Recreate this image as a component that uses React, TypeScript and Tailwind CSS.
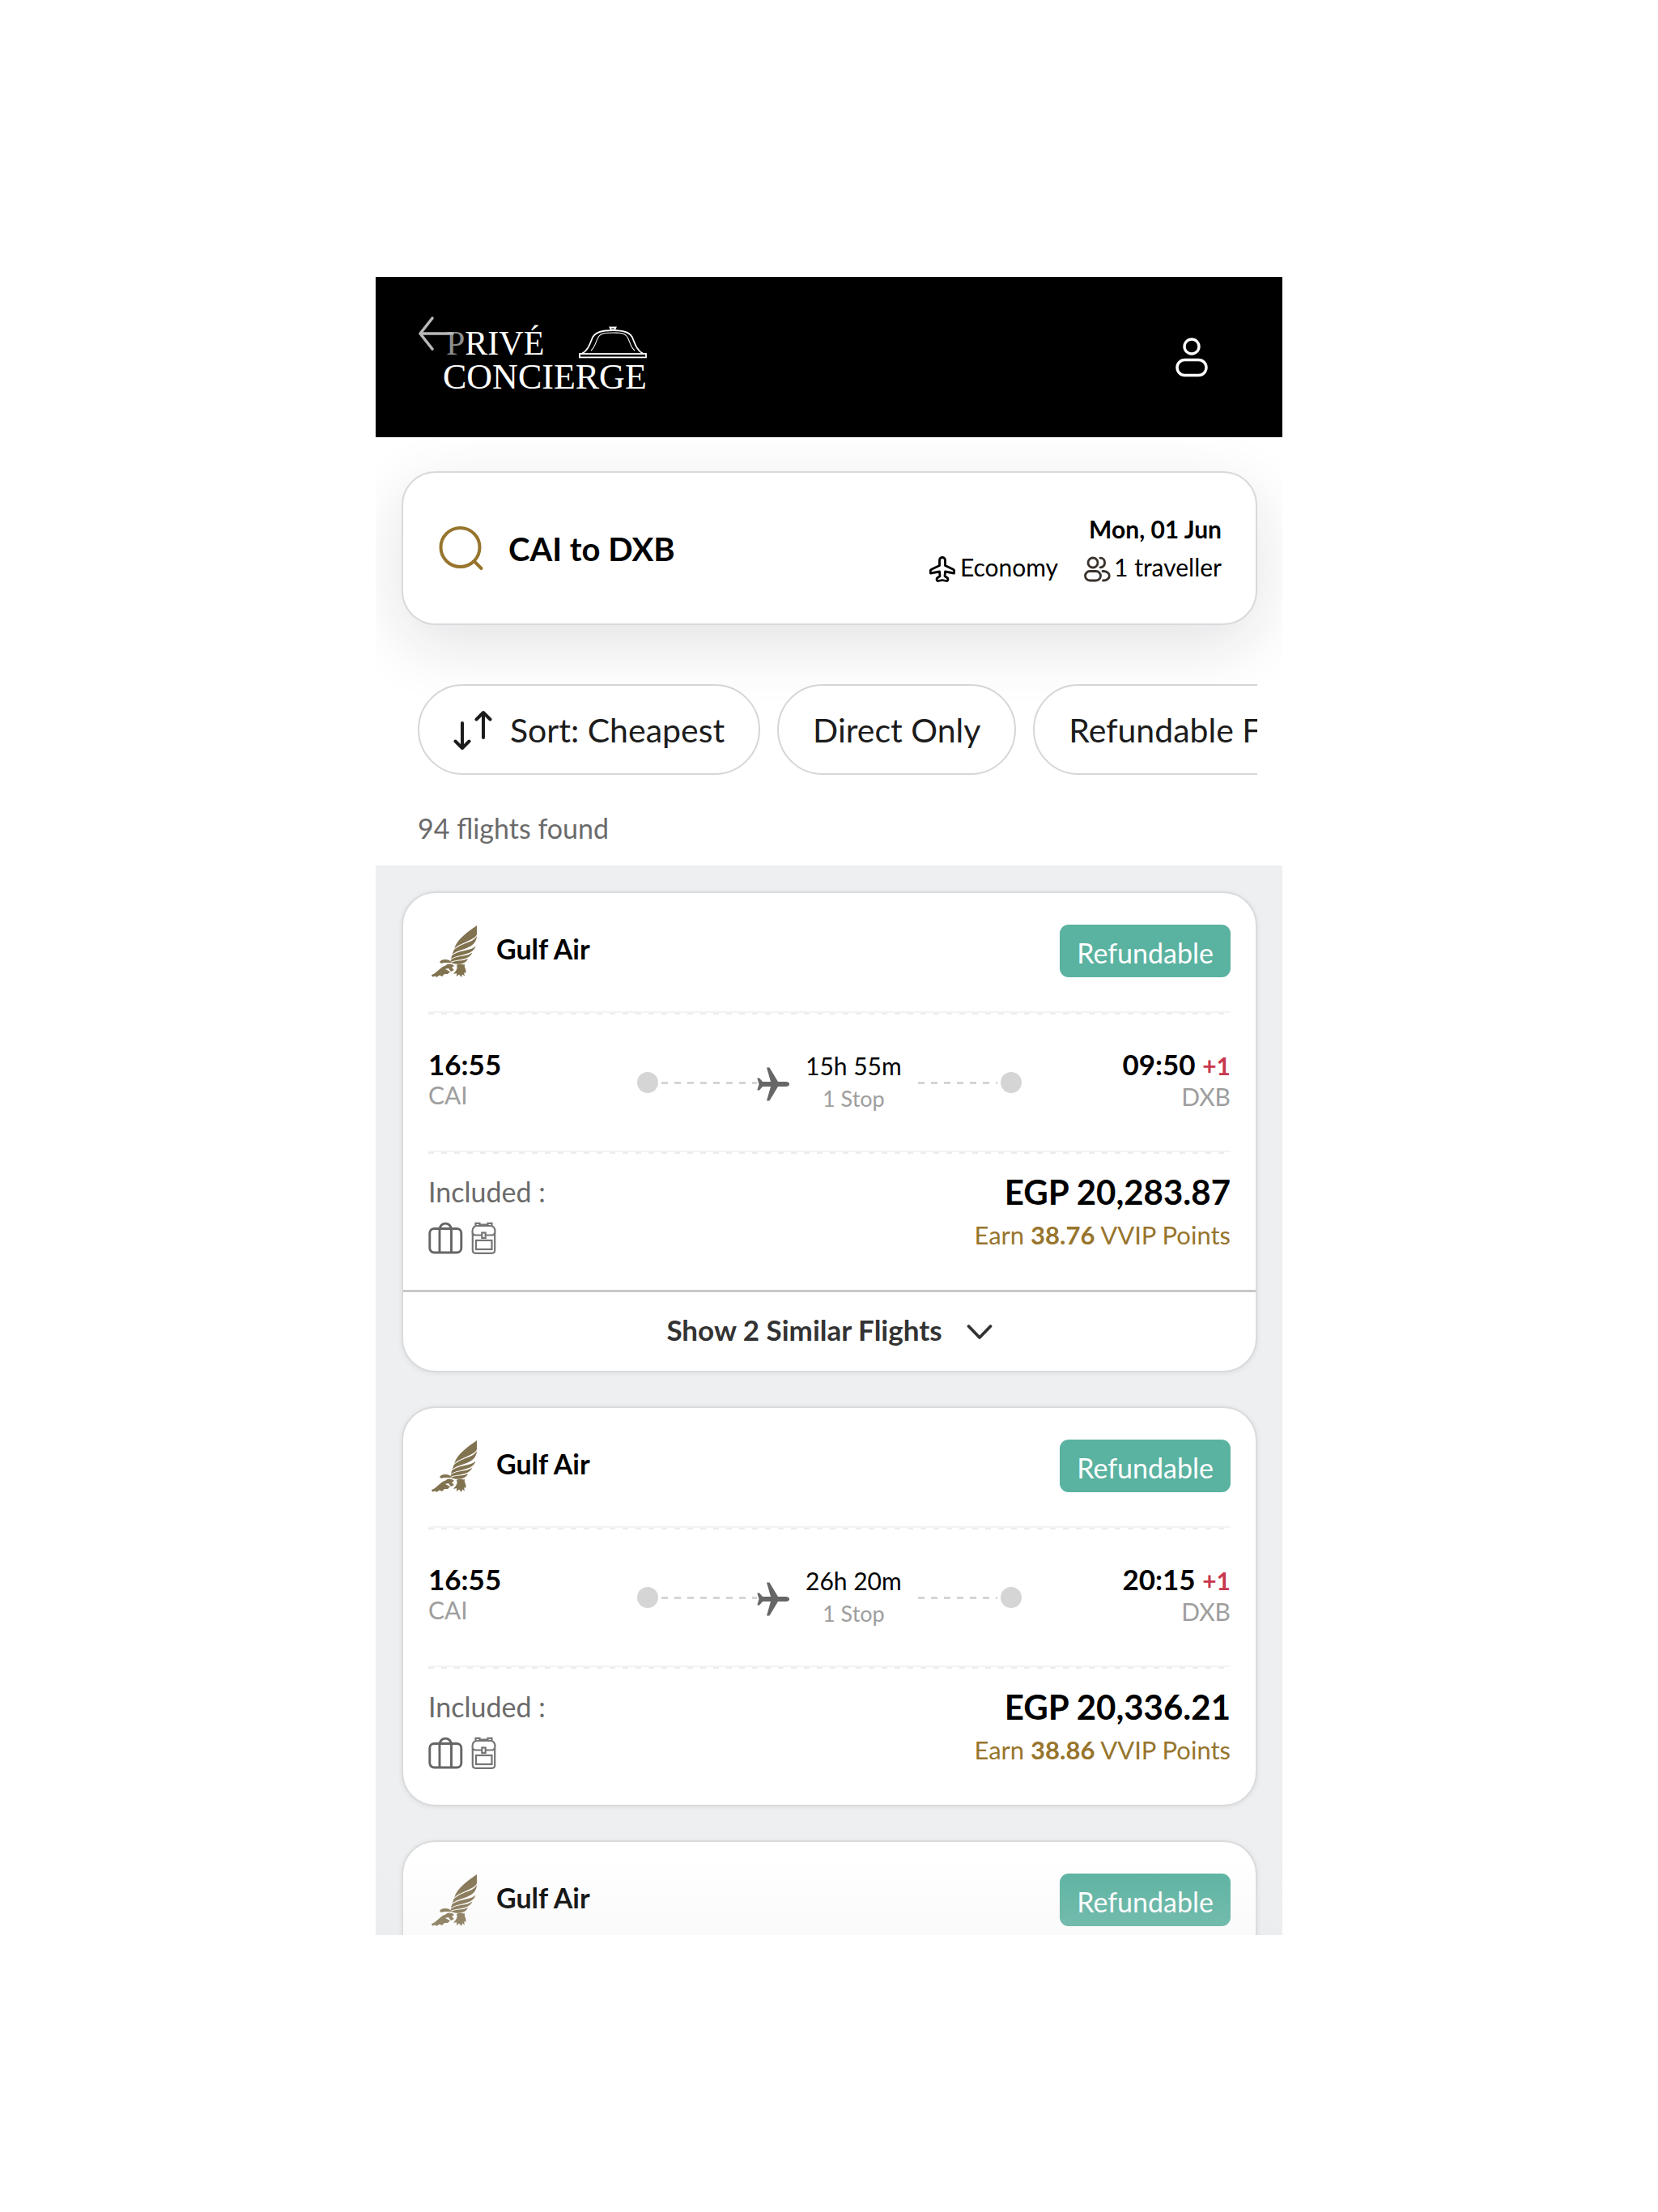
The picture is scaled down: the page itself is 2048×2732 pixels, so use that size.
type Flight = {
  id: number;
  airline: string;
  departs: string;
  from: string;
  duration: string;
  stops: string;
  arrives: string;
  dayShift: string;
  to: string;
  price: string;
  points: string;
  similar?: number;
};

const flights: Flight[] = [
  {
    id: 1,
    airline: "Gulf Air",
    departs: "16:55",
    from: "CAI",
    duration: "15h 55m",
    stops: "1 Stop",
    arrives: "09:50",
    dayShift: "+1",
    to: "DXB",
    price: "EGP 20,283.87",
    points: "38.76",
    similar: 2,
  },
  {
    id: 2,
    airline: "Gulf Air",
    departs: "16:55",
    from: "CAI",
    duration: "26h 20m",
    stops: "1 Stop",
    arrives: "20:15",
    dayShift: "+1",
    to: "DXB",
    price: "EGP 20,336.21",
    points: "38.86",
  },
  {
    id: 3,
    airline: "Gulf Air",
    departs: "16:55",
    from: "CAI",
    duration: "26h 20m",
    stops: "1 Stop",
    arrives: "20:15",
    dayShift: "+1",
    to: "DXB",
    price: "EGP 20,336.21",
    points: "38.86",
  },
];

export default function App() {
  return (
    <div className="h-screen bg-white py-[342px] font-['Lato','Open_Sans',sans-serif] text-black">
      <main className="relative mx-auto h-full w-full max-w-[1120px] overflow-hidden bg-white">
        <Header />
        <section className="pt-[42px]">
          <SearchSummary />
          <Filters />
          <p className="px-[52px] pt-[50px] pb-[30px] text-[34px] leading-8 text-[#6b6b6b]">94 flights found</p>
        </section>
        <section className="flex flex-col gap-[42px] bg-[#eeeff1] pt-8 pr-[31px] pb-10 pl-8">
          {flights.map((f) => (
            <FlightCard key={f.id} flight={f} />
          ))}
        </section>
        <div
          className="pointer-events-none absolute inset-x-0 bottom-0 h-24 bg-linear-to-b from-[#e6e6e6]/0 to-[#e6e6e6]/20"
          aria-hidden="true"
        />
      </main>
    </div>
  );
}

function Header() {
  return (
    <header className="relative z-10 flex items-start justify-between bg-black pt-[60px] pr-[92px] pb-[54px] pl-[83px] text-white">
      <button type="button" aria-label="Back" className="absolute top-[48px] left-[52px]">
        <BackArrow />
      </button>
      <a href="#" className="font-['Liberation_Serif',serif]">
        <span className="flex items-end justify-between pl-1">
          <span className="text-[42px] leading-[44px]">
            <span className="text-[#8c8c8c]">P</span>RIVÉ
          </span>
          <Cloche />
        </span>
        <span className="block text-[44px] leading-10">CONCIERGE</span>
      </a>
      <button type="button" aria-label="Account" className="pt-[14px]">
        <UserIcon />
      </button>
    </header>
  );
}

function SearchSummary() {
  return (
    <div className="mr-[31px] ml-8 flex h-[190px] items-center justify-between rounded-[42px] border-2 border-[#d9d9d9] bg-white pr-[42px] pl-[44px] shadow-[0_24px_80px_rgba(25,25,45,0.12)]">
      <div className="flex items-center gap-[30px]">
        <SearchIcon />
        <h1 className="pt-[2px] text-[40px] leading-[50px] font-bold">CAI to DXB</h1>
      </div>
      <div className="flex flex-col items-end text-[30px] leading-[47px]">
        <span className="font-bold">Mon, 01 Jun</span>
        <div className="flex gap-8">
          <span className="flex items-center gap-[6px]">
            <PlaneOutline />
            Economy
          </span>
          <span className="flex items-center gap-1">
            <Travellers />
            1 traveller
          </span>
        </div>
      </div>
    </div>
  );
}

function Filters() {
  const chip =
    "flex h-28 shrink-0 items-center gap-[22px] rounded-full border-2 border-[#d6d6d6] bg-white/70 px-[42px] pt-[2px] text-[41px] whitespace-nowrap text-[#1c1c1c]";
  return (
    <div className="relative mt-[73px] mr-[31px] ml-[52px] flex gap-[21px] overflow-hidden">
      <button type="button" className={chip}>
        <SortIcon />
        Sort: Cheapest
      </button>
      <button type="button" className={chip}>Direct Only</button>
      <button type="button" className={chip}>Refundable Flights</button>
    </div>
  );
}

function FlightCard({ flight }: { flight: Flight }) {
  return (
    <article className="rounded-[42px] border-2 border-[#dadbdd] bg-white shadow-[0_1px_6px_rgba(0,0,0,0.08)]">
      <div className="px-[31px] pt-[39px] pb-10">
        <div className="flex items-center justify-between pb-[42px]">
          <div className="flex items-center gap-6 pl-1">
            <Falcon />
            <h2 className="pb-[6px] text-[34px] leading-10 font-bold">{flight.airline}</h2>
          </div>
          <span className="rounded-[11px] bg-[#5ab2a0] px-[21px] pt-1 text-[34px] leading-[61px] text-white">
            Refundable
          </span>
        </div>

        <Divider />

        <div className="grid grid-cols-[26fr_48fr_26fr] pt-[41px] pb-[43px]">
          <div>
            <p className="text-[35px] leading-10 font-bold">{flight.departs}</p>
            <p className="text-[30px] leading-9 text-[#9e9e9e]">{flight.from}</p>
          </div>
          <div className="flex items-center pt-[2px]">
            <Dot />
            <Dashes className="ml-1 flex-[6]" />
            <PlaneSolid />
            <div className="px-5 text-center">
              <p className="text-[30px] leading-10">{flight.duration}</p>
              <p className="text-[27px] leading-[42px] text-[#9e9e9e]">{flight.stops}</p>
            </div>
            <Dashes className="mr-1 flex-[5]" />
            <Dot />
          </div>
          <div className="text-right">
            <p className="text-[35px] leading-10 font-bold">
              {flight.arrives} <span className="text-[30px] text-[#c8384e]">{flight.dayShift}</span>
            </p>
            <p className="text-[30px] leading-9 text-[#9e9e9e]">{flight.to}</p>
          </div>
        </div>

        <Divider />

        <div className="flex justify-between pt-5">
          <div>
            <p className="pt-[2px] text-[34px] leading-[50px] text-[#6b6b6b]">Included :</p>
            <div className="flex gap-[10px] pt-3">
              <Suitcase />
              <Backpack />
            </div>
          </div>
          <div className="pt-[2px] text-right">
            <p className="text-[42px] leading-[50px] font-bold">{flight.price}</p>
            <p className="text-[31px] leading-[56px] text-[#97752d]">
              Earn <span className="font-bold">{flight.points}</span> VVIP Points
            </p>
          </div>
        </div>
      </div>

      {flight.similar && (
        <button
          type="button"
          className="flex h-[100px] w-full items-center justify-center gap-[30px] rounded-b-[40px] border-t-[3px] border-[#c9c9c9] pb-1 text-[35px] font-bold text-[#333333]"
        >
          Show {flight.similar} Similar Flights
          <Chevron />
        </button>
      )}
    </article>
  );
}

function Divider() {
  return (
    <div
      className="h-1 border-t-2 border-[#f3f3f3] bg-[repeating-linear-gradient(to_right,#ececec_0_7px,transparent_7px_16px)]"
      aria-hidden="true"
    />
  );
}

function Dashes({ className }: { className: string }) {
  return (
    <span
      className={`h-[3px] bg-[repeating-linear-gradient(to_right,#d5d5d5_0_8px,transparent_8px_16px)] ${className}`}
    />
  );
}

function Dot() {
  return <span className="size-[26px] shrink-0 rounded-full bg-[#d5d5d5]" />;
}

function BackArrow() {
  return (
    <svg width="46" height="44" viewBox="0 0 46 44" fill="none" stroke="#b8b8b8" strokeWidth="3.6" strokeLinecap="round" strokeLinejoin="round">
      <path d="M18 3 L3 22 L18 41 M3 22 H43" />
    </svg>
  );
}

function Cloche() {
  return (
    <svg width="84" height="40" viewBox="0 0 84 40" className="mb-[3px]" fill="none" stroke="white" strokeWidth="1.8">
      <rect x="1" y="34" width="82" height="4.4" />
      <path d="M3 34 C10 31 13 24 16 16 C19 7 29 5 42 5 C55 5 64 7 67 16 C70 24 73 31 80 34" />
      <path d="M15 30 C21 25 21 17 25 12 C28 8 34 8 42 8 C50 8 56 8 59 12 C63 17 63 25 69 30" strokeWidth="1.1" />
      <path d="M38.500 1.500 H45.500 L44 4.500 H40 Z" />
    </svg>
  );
}

function UserIcon() {
  return (
    <svg width="40" height="50" viewBox="0 0 40 50" fill="none" stroke="white" strokeWidth="3.4">
      <circle cx="20" cy="12" r="9" />
      <rect x="2" y="28.500" width="36" height="19" rx="9.500" />
    </svg>
  );
}

function SearchIcon() {
  return (
    <svg width="56" height="58" viewBox="0 0 56 58" fill="none" stroke="#97752d" strokeWidth="4" strokeLinecap="round">
      <circle cx="26.500" cy="28" r="24" />
      <path d="M43.500 45 L52.500 54" />
    </svg>
  );
}

function PlaneOutline() {
  return (
    <svg width="32" height="32" viewBox="0 0 32 32" className="mt-1" fill="none" stroke="currentColor" strokeWidth="2.800" strokeLinejoin="round">
      <path d="M12.500 5 C12.500 0.300 19.500 0.300 19.500 5 V11.500 L29 16 C31 17 31.500 18.500 30.500 21 L19.500 19 L19 24.500 L22.500 27 C23.500 29 22.500 30.800 21 30.500 L16 29.500 L11 30.500 C9.500 30.800 8.500 29 9.500 27 L13 24.500 L12.500 19 L1.500 21 C0.500 18.500 1 17 3 16 L12.500 11.500 Z" />
    </svg>
  );
}

function Travellers() {
  return (
    <svg width="33" height="32" viewBox="0 0 33 32" className="mt-1" fill="none" stroke="#3a322c" strokeWidth="2.800" strokeLinecap="round">
      <circle cx="11" cy="8" r="6" />
      <rect x="1.500" y="18.500" width="19" height="11.500" rx="5.700" />
      <path d="M20 2.200 C27.500 2.200 27.500 13.800 20 13.800" />
      <path d="M23 18.500 C34 18 34 30 23.500 30" />
    </svg>
  );
}

function SortIcon() {
  return (
    <svg width="48" height="50" viewBox="0 0 48 50" fill="none" stroke="currentColor" strokeWidth="4" strokeLinecap="round" strokeLinejoin="round">
      <path d="M11 16 V47 M2.500 38.500 L11 47 L19.500 38.500" />
      <path d="M37 34 V3 M28.500 11.500 L37 3 L45.500 11.500" />
    </svg>
  );
}

function PlaneSolid() {
  return (
    <svg width="40" height="42" viewBox="0 0 40 42" className="mt-1 shrink-0" fill="#666666">
      <path d="M12 0.500 H15.500 L26 18 H36 C41.500 18.500 41.500 23.500 36 24 H26 L15.500 41.500 H12 L17 24 H7 L3 28.500 H0.300 L2.500 21 L0.300 13.500 H3 L7 18 H17 Z" />
    </svg>
  );
}

function Suitcase() {
  return (
    <svg width="43" height="40" viewBox="0 0 43 40" fill="none" stroke="#666666" strokeWidth="2.900">
      <rect x="1.800" y="8.500" width="39" height="29.500" rx="5.500" />
      <path d="M14 38 V10 C14 -0.500 28.500 -0.500 28.500 10 V38" />
    </svg>
  );
}

function Backpack() {
  return (
    <svg width="31" height="40" viewBox="0 0 31 40" fill="none" stroke="#757575" strokeWidth="2.200">
      <path d="M1.500 12 C1.500 6.500 4 5 8 5 H23 C27 5 29.500 6.500 29.500 12 C29.500 15.500 27.500 16.500 25 16.500 H6 C3.500 16.500 1.500 15.500 1.500 12 Z" />
      <path d="M1.800 14 V35 C1.800 37.500 3 38.800 5.500 38.800 H25.500 C28 38.800 29.200 37.500 29.200 35 V14" />
      <path d="M5.500 5 V1.800 H10.500 V5 M20.500 5 V1.800 H25.500 V5 M11 3.500 H20" />
      <rect x="13.300" y="13.500" width="4.400" height="6.500" fill="white" />
      <rect x="6" y="23" width="19.500" height="11" />
    </svg>
  );
}

function Chevron() {
  return (
    <svg width="32" height="20" viewBox="0 0 32 20" className="mt-1" fill="none" stroke="currentColor" strokeWidth="3.800" strokeLinecap="round" strokeLinejoin="round">
      <path d="M2.500 3 L16 17 L29.500 3" />
    </svg>
  );
}

function Falcon() {
  return (
    <svg width="56" height="64" viewBox="0 0 56 64" className="shrink-0" fill="#827350">
      {/* raised wing */}
      <path d="M56 0 C45 8 32 16 28 29 C35 21 53 19 56 11 Z" />
      <path d="M56 13 C51 22 37 21 27.500 30.500 L25.500 36 C34 28 55 30 56 13 Z" />
      <path d="M54.500 25.500 C49 32 34 29.500 25 37.500 L24 41.500 C32 35 51 38 54.500 25.500 Z" />
      <path d="M50.500 33.500 C43 39 32 36.500 24 42.500 L23 45.500 C31 41 46 44 50.500 33.500 Z" />
      <path d="M45 41 C39 44.500 30 42.500 24 46 C30 49 42 49 45 41 Z" />
      {/* head and body */}
      <path d="M10 45 C12 42 17 41 22 43 L25 46 C20 46 15 45.500 12 47 Z" />
      <path d="M18 49 C22 46 26 48 28 50 L25 52 L28 55 L24 57 L21 53 L16 54 Z" />
      {/* tail and lower wing */}
      <path d="M0 61 C6 60 10 51 19 49 L17 54 L23 57 L20 60 L16 60 L13 63 L10 61.500 L6 64 L5 62.500 L1 63.500 Z" />
      <path d="M31 49 C34 47 38 49 41 48 C40 52 44 55 42 59 L40 58 L41 62.500 L38 60.500 L37 64 L34 60.500 L31 63 L31 59 L27 60 C29 57 33 54 31 49 Z" />
    </svg>
  );
}
